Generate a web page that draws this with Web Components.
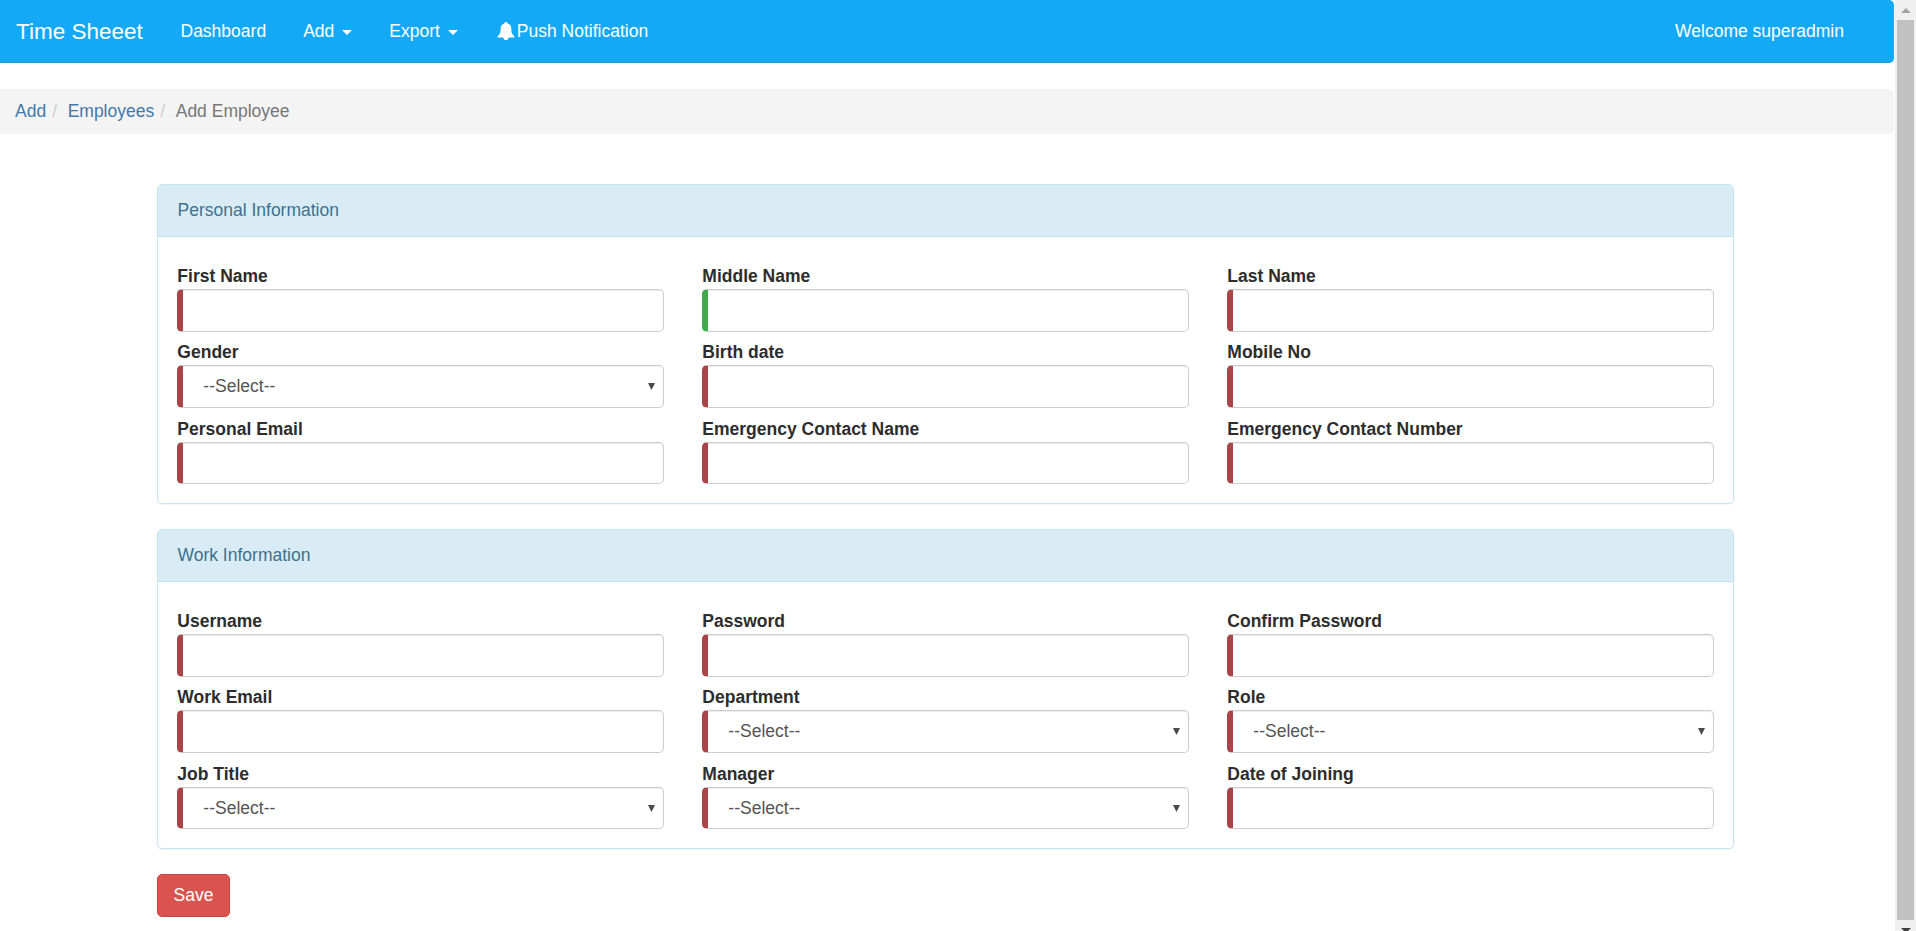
<!DOCTYPE html>
<html lang="en">
<head>
<meta charset="utf-8">
<title>Time Sheeet</title>
<style>
html,body{margin:0;height:100%;overflow:hidden;background:#fff}
body{font:17.5px/25px "Liberation Sans",Arial,sans-serif;color:#333}
</style>
</head>
<body>
<timesheet-app></timesheet-app>
<script>
const define = (name, html, setup) => customElements.define(name, class extends HTMLElement {
  constructor() {
    super();
    this.attachShadow({ mode: 'open' });
  }
  connectedCallback() {
    const t = document.createElement('template');
    t.innerHTML = '<style>*{box-sizing:border-box}</style>' + html;
    this.shadowRoot.replaceChildren(t.content.cloneNode(true));
    if (setup) setup(this, this.shadowRoot);
  }
});

define('nav-item', `<style>
:host{display:flex;align-items:center;white-space:nowrap;color:#fff;padding-top:1px}
.caret{display:none;margin-left:8px;border:5px solid transparent;border-top-color:#fff;border-bottom:0}
:host([caret]) .caret{display:block;margin-top:2px}
</style><slot name="icon"></slot><slot></slot><i class="caret"></i>`);

define('app-navbar', `<style>
:host{display:flex;align-items:center;height:63px;padding:0 50px 0 16px;background:#14a9f6;border-bottom:1px solid #1b9be0;border-radius:0 5px 5px 0}
.brand{font-size:22.5px;color:#fff;width:164.500px;white-space:nowrap}
.links{display:flex;gap:37px;flex:1}
svg{display:block;width:18px;height:18px;margin:-1px 2px 0 2px}
</style>
<span class="brand">Time Sheeet</span>
<nav class="links">
<nav-item>Dashboard</nav-item><nav-item caret>Add</nav-item><nav-item caret>Export</nav-item>
<nav-item><svg slot="icon" viewBox="0 0 18 18" fill="#fff"><path d="M9 0c1 0 1.600.6 1.700 1.500C13.100 2.200 14.300 4.100 14.300 6.600c0 4.200.8 5.700 3.200 7.800v1H.5v-1c2.400-2.100 3.200-3.600 3.200-7.800 0-2.500 1.200-4.400 3.600-5.100C7.400.6 8 0 9 0zM6.300 15.400h5.400c-.2 1.700-1.300 2.600-2.700 2.600s-2.500-.9-2.700-2.600z"/></svg>Push Notification</nav-item>
</nav><nav-item>Welcome superadmin</nav-item>`);

define('crumb-bar', `<style>
:host{display:flex;align-items:center;height:44.500px;margin-top:26px;padding-left:15px;background:#f4f4f4;border-radius:0 5px 5px 0}
a{color:#4378ab}i{font-style:normal;color:#ccc;width:21.500px;padding-left:6px}span{color:#777}
</style><a>Add</a><i>/</i><a>Employees</a><i>/</i><span>Add Employee</span>`);

define('info-panel', `<style>
:host{display:block;height:320px;border:1px solid #c3e5ee;border-radius:5px;box-shadow:0 1px 1px rgba(0,0,0,.05);margin-bottom:25px}
header{height:52px;padding:12.500px 19.500px;background:#d9ecf6;border-bottom:1px solid #c3e5ee;color:#3d718d;border-radius:4px 4px 0 0}
.grid{display:grid;grid-template-columns:repeat(3,1fr);column-gap:37.500px;grid-template-rows:76px 77px 68px;padding:26px 18.750px 0}
</style><header></header><div class="grid"><slot></slot></div>`,
(el, root) => root.querySelector('header').textContent = el.getAttribute('heading'));

define('form-field', `<style>
:host{display:grid;grid-template-rows:26px 43px;--bar:#a94448}
:host(:nth-child(n+7)){grid-template-rows:26px 42px}
:host([valid]){--bar:#3fab4c}
label{font-weight:700;padding:1px 0 0 .6px;color:#2d2d2d}
.control{display:flex;align-items:center;justify-content:space-between;width:100%;height:100%;margin:0;padding:0 8px 0 20.600px;font:inherit;color:#555;background:#fff;border:1px solid #ccc;border-left:6px solid var(--bar);border-radius:5px;box-shadow:inset 0 1px 1px rgba(0,0,0,.075);outline:0}
svg{width:7px;height:7px}
</style><label></label>`,
(el, root) => {
  root.querySelector('label').textContent = el.getAttribute('label');
  root.append(document.createElement(el.hasAttribute('select') ? 'div' : 'input'));
  const c = root.lastChild;
  c.className = 'control';
  if (el.hasAttribute('select')) {
    c.setAttribute('role', 'combobox');
    c.innerHTML = '<span>--Select--</span><svg viewBox="0 0 7 7"><path d="M0 0h7L3.500 7z" fill="#4a4a4a"/></svg>';
  }
});

define('save-button', `<style>
:host{display:block}
button{width:73px;height:43px;padding:0;font:inherit;color:#fff;background:#d9534f;border:1px solid #d1433f;border-radius:5px}
</style><button><slot></slot></button>`);

define('scroll-rail', `<style>
:host{display:flex;flex-direction:column;align-items:center;width:21px;height:931px;background:#f0f0f0;overflow:hidden}
.up{height:20px;padding-top:8px}
.thumb{width:17px;height:900px;background:#c1c1c1}
.down{padding-top:8px;height:11px;overflow:hidden}
svg{display:block}
</style><div class="up"><svg width="10" height="5"><path d="M0 5L5 0l5 5z" fill="#a3a3a3"/></svg></div><div class="thumb"></div>
<div class="down"><svg width="10" height="5"><path d="M0 0h10L5 5z" fill="#404040"/></svg></div>`);

define('timesheet-app', `<style>
:host{display:grid;grid-template-columns:1894px 1fr;height:931px;overflow:hidden}
main{min-width:0}
scroll-rail{margin-left:1px}
.form{margin:50.500px 160px 0 157px}
</style>
<main><app-navbar></app-navbar><crumb-bar></crumb-bar>
<div class="form">
<info-panel heading="Personal Information">
<form-field label="First Name"></form-field><form-field label="Middle Name" valid></form-field><form-field label="Last Name"></form-field>
<form-field label="Gender" select></form-field><form-field label="Birth date"></form-field><form-field label="Mobile No"></form-field>
<form-field label="Personal Email"></form-field><form-field label="Emergency Contact Name"></form-field><form-field label="Emergency Contact Number"></form-field>
</info-panel>
<info-panel heading="Work Information">
<form-field label="Username"></form-field><form-field label="Password"></form-field><form-field label="Confirm Password"></form-field>
<form-field label="Work Email"></form-field><form-field label="Department" select></form-field><form-field label="Role" select></form-field>
<form-field label="Job Title" select></form-field><form-field label="Manager" select></form-field><form-field label="Date of Joining"></form-field>
</info-panel>
<save-button>Save</save-button>
</div></main><scroll-rail></scroll-rail>`);
</script>
</body>
</html>
